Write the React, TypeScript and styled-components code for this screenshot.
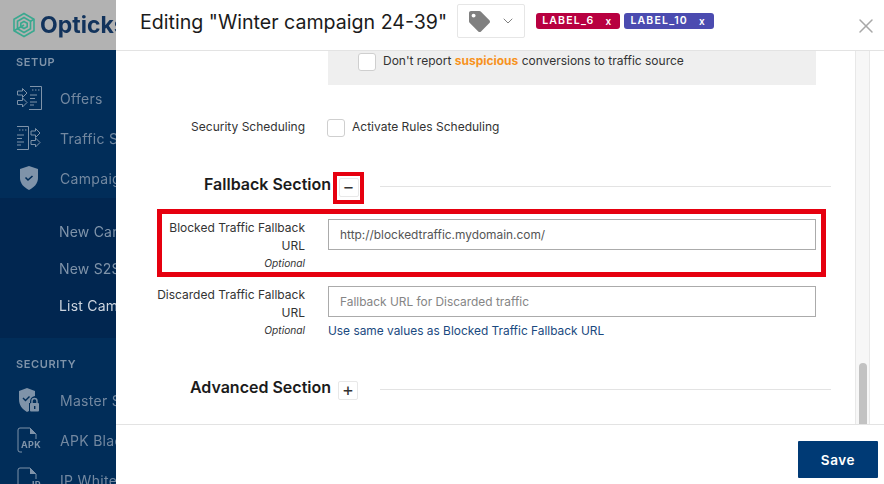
import React from "react";
import styled, { createGlobalStyle } from "styled-components";
import { FaTag } from "react-icons/fa";
import { ChevronDown, X } from "lucide-react";

const GlobalStyle = createGlobalStyle`
  html, body {
    margin: 0;
    padding: 0;
    width: 884px;
    height: 484px;
    overflow: hidden;
    font-family: Inter, "Liberation Sans", sans-serif;
    background: #fff;
  }
  * { box-sizing: border-box; }
`;

const OffersIcon = () => (
  <svg width="26" height="26" viewBox="0 0 26 26" fill="none" stroke="currentColor" strokeWidth="1">
    <path d="M14 1.500h11.500v23H13" />
    <path d="M16 5h8" strokeDasharray="1.500 1.500" />
    <path d="M14 10h7M14 13.500h5M14 17h7M14 20h4" />
    <path d="M1.500 6h5V3.500L11 8l-4.500 4.500V10h-5z" />
    <path d="M1.500 15.500h5V13l4.500 4.500L6.500 22v-2.500h-5z" />
  </svg>
);

const TrafficIcon = () => (
  <svg width="26" height="26" viewBox="0 0 26 26" fill="none" stroke="currentColor" strokeWidth="1">
    <path d="M1 1.500h11.500v23H1" />
    <path d="M3 5h8" strokeDasharray="1.500 1.500" />
    <path d="M1 10h7M1 13.500h5M1 17h7M1 20h4" />
    <path d="M15 6h4.500V3.500L24 8l-4.500 4.500V10H15z" />
    <path d="M15 15.500h4.500V13l4.500 4.500-4.500 4.500v-2.500H15z" />
  </svg>
);

const ShieldIcon = () => (
  <svg width="20" height="24" viewBox="0 0 20 24">
    <path fill="currentColor" d="M10 0l9 3v9c0 5.500-4 9.500-9 12-5-2.500-9-6.500-9-12V3z" />
    <path fill="none" stroke="#012c57" strokeWidth="1.600" d="M6.500 11.500L9 14l4.500-4" />
  </svg>
);

const LockShieldIcon = () => (
  <svg width="22" height="26" viewBox="0 0 22 26">
    <path fill="currentColor" d="M9 1l8 3v5a6 6 0 0 0-5 6v1h-1v8l-2 1C4 22 1 18 1 12V4z" />
    <path fill="none" stroke="#012c57" strokeWidth="1.400" d="M5 11l2.500 2.500 4-4" />
    <rect x="12" y="16" width="9" height="8.500" rx="1" fill="currentColor" />
    <path fill="none" stroke="currentColor" strokeWidth="1.400" d="M14 16v-2a2.500 2.500 0 0 1 5 0v2" />
    <rect x="16" y="19" width="1.400" height="3" fill="#012c57" />
  </svg>
);

const FileIcon = ({ label }: { label: string }) => (
  <svg width="25" height="26" viewBox="0 0 25 26" fill="none">
    <path stroke="currentColor" d="M5 25H3a2 2 0 0 1-2-2V3a2 2 0 0 1 2-2h10l6 6v5" />
    <path fill="currentColor" d="M13 1l6 6h-6z" />
    <text x="24" y="21" fontSize="9" fontWeight="700" textAnchor="end" fill="currentColor" fontFamily="Inter, sans-serif">
      {label}
    </text>
  </svg>
);

const LogoIcon = () => (
  <svg width="24" height="26" viewBox="0 0 24 26" fill="none" stroke="#3aa88f" strokeWidth="1.600" style={{ flex: "none" }}>
    <path d="M12 1.500l10 5.700v11.600l-10 5.700-10-5.700V7.200z" />
    <path d="M12 5.500l6.500 3.700v7.600L12 20.500l-6.500-3.700V9.200z" />
    <path d="M12 9.500l3.200 1.800v3.400L12 16.500l-3.200-1.800v-3.400z" />
    <path d="M5.500 16.800l6.500-3.800M18.500 9.200L22 7.200M2 18.800l3.500-2" />
  </svg>
);

const App = () => {
  return (
    <Page>
      <GlobalStyle />
      <Sidebar>
        <LogoBar>
          <LogoIcon />
          <LogoText>Opticks</LogoText>
        </LogoBar>
        <NavBody>
          <NavHeading>SETUP</NavHeading>
          <NavItem><NavIcon><OffersIcon /></NavIcon>Offers</NavItem>
          <NavItem><NavIcon><TrafficIcon /></NavIcon>Traffic Sources</NavItem>
          <NavItem><NavIcon><ShieldIcon /></NavIcon>Campaigns</NavItem>
          <SubMenu>
            <SubItem>New Campaign</SubItem>
            <SubItem>New S2S Campaign</SubItem>
            <SubItem $active>List Campaigns</SubItem>
          </SubMenu>
          <NavHeading>SECURITY</NavHeading>
          <NavItem><NavIcon><LockShieldIcon /></NavIcon>Master Settings</NavItem>
          <NavItem><NavIcon><FileIcon label="APK" /></NavIcon>APK Blacklist</NavItem>
          <NavItem><NavIcon><FileIcon label="IP" /></NavIcon>IP Whitelist</NavItem>
        </NavBody>
      </Sidebar>

      <Modal>
        <Header>
          <Title>Editing "Winter campaign 24-39"</Title>
          <TagSelect>
            <FaTag size={21} color="#808080" />
            <ChevronDown size={16} strokeWidth={1.5} color="#808080" />
          </TagSelect>
          <Labels>
            <Label $color="#b80040">LABEL_6<LabelClose>x</LabelClose></Label>
            <Label $color="#4b4bb0">LABEL_10<LabelClose>x</LabelClose></Label>
          </Labels>
          <CloseButton><X size={24} strokeWidth={1.500} color="#a8a8a8" /></CloseButton>
        </Header>

        <Body>
          <Scroll>
            <GreyPanel>
              <Checkbox />
              <CheckText>
                Don't report <Suspicious>suspicious</Suspicious> conversions to traffic source
              </CheckText>
            </GreyPanel>

            <ScheduleRow>
              <ScheduleLabel>Security Scheduling</ScheduleLabel>
              <Checkbox />
              <CheckText>Activate Rules Scheduling</CheckText>
            </ScheduleRow>

            <SectionRow $top={39}>
              <SectionTitle>Fallback Section</SectionTitle>
              <ToggleHighlight><Toggle>−</Toggle></ToggleHighlight>
              <SectionLine />
            </SectionRow>

            <HighlightBox>
              <FieldLabel>
                Blocked Traffic Fallback URL
                <Optional>Optional</Optional>
              </FieldLabel>
              <Field>
                <UrlInput readOnly value="http://blockedtraffic.mydomain.com/" />
              </Field>
            </HighlightBox>

            <FieldRow>
              <FieldLabel>
                Discarded Traffic Fallback URL
                <Optional>Optional</Optional>
              </FieldLabel>
              <Field>
                <UrlInput readOnly placeholder="Fallback URL for Discarded traffic" />
                <SameLink>Use same values as Blocked Traffic Fallback URL</SameLink>
              </Field>
            </FieldRow>

            <SectionRow $top={40}>
              <SectionTitle>Advanced Section</SectionTitle>
              <PlainToggle>+</PlainToggle>
              <SectionLine />
            </SectionRow>
          </Scroll>
          <ScrollTrack>
            <ScrollThumb />
          </ScrollTrack>
        </Body>

        <Footer>
          <SaveButton>Save</SaveButton>
        </Footer>
      </Modal>
    </Page>
  );
};

export default App;

const Page = styled.div`
  width: 884px;
  height: 484px;
  display: flex;
  overflow: hidden;
`;

const Sidebar = styled.aside`
  width: 116px;
  flex: none;
  display: flex;
  flex-direction: column;
  overflow: hidden;
  white-space: nowrap;
  filter: blur(0.4px);
`;

const LogoBar = styled.div`
  height: 50px;
  flex: none;
  background: #b2b2b2;
  display: flex;
  align-items: center;
  gap: 4px;
  padding-left: 12px;
`;

const LogoText = styled.span`
  font-size: 23px;
  font-weight: 700;
  color: #12335c;
`;

const NavBody = styled.nav`
  flex: 1;
  background: #012d59;
  overflow: hidden;
`;

const NavHeading = styled.div`
  height: 28px;
  padding: 6px 0 0 16px;
  font-size: 11px;
  font-weight: 600;
  letter-spacing: 0.6px;
  line-height: 13px;
  color: #7f93a9;
`;

const NavItem = styled.div`
  height: 40px;
  display: flex;
  align-items: center;
  color: #7388a0;
  font-size: 14px;
  letter-spacing: 0.3px;
`;

const NavIcon = styled.span`
  width: 26px;
  flex: none;
  margin: 0 18px 0 16px;
  display: flex;
  justify-content: center;
  color: #7f93a9;
`;

const SubMenu = styled.div`
  background: #012650;
  padding: 15px 0 14px;
  margin-bottom: 14px;
`;

const SubItem = styled.div<{ $active?: boolean }>`
  height: 37px;
  line-height: 37px;
  padding-left: 59px;
  font-size: 14px;
  letter-spacing: 0.2px;
  color: ${(props) => (props.$active ? "#ccd4de" : "#7f93a9")};
`;

const Modal = styled.main`
  flex: 1;
  min-width: 0;
  background: #fff;
  display: flex;
  flex-direction: column;
`;

const Header = styled.header`
  height: 51px;
  flex: none;
  border-bottom: 1px solid #e3e3e3;
  display: flex;
  align-items: flex-start;
  padding-left: 24px;
`;

const Title = styled.h1`
  margin: 9px 0 0;
  font-size: 19.600px;
  font-weight: 400;
  line-height: 26px;
  color: #1b1b1b;
  white-space: nowrap;
`;

const TagSelect = styled.div`
  width: 68px;
  height: 34px;
  margin: 4px 0 0 10px;
  border: 1px solid #e6e6e6;
  border-radius: 2px;
  display: flex;
  align-items: center;
  justify-content: space-between;
  padding: 0 8px 0 11px;
`;

const Labels = styled.div`
  display: flex;
  gap: 4px;
  margin: 13px 0 0 11px;
`;

const Label = styled.span<{ $color: string }>`
  height: 16px;
  border-radius: 3px;
  background: ${(props) => props.$color};
  color: #fff;
  font-size: 10.500px;
  font-weight: 600;
  letter-spacing: 1.200px;
  line-height: 16px;
  padding: 0 8px 0 6px;
  display: flex;
  gap: 11px;
`;

const LabelClose = styled.span`
  font-size: 10px;
`;

const CloseButton = styled.div`
  margin: 14px 6px 0 auto;
  display: flex;
`;

const Body = styled.div`
  flex: 1;
  min-height: 0;
  display: flex;
  overflow: hidden;
`;

const Scroll = styled.div`
  width: 739px;
  flex: none;
  overflow: hidden;
`;

const GreyPanel = styled.div`
  width: 488px;
  height: 34px;
  margin-left: 212px;
  padding: 2px 0 0 30px;
  background: #efefef;
  display: flex;
  align-items: flex-start;
  gap: 7px;
`;

const Checkbox = styled.span`
  width: 18px;
  height: 18px;
  flex: none;
  background: #fff;
  border: 1px solid #cfcfcf;
  border-radius: 3px;
`;

const CheckText = styled.span`
  font-size: 12px;
  line-height: 16px;
  color: #333;
`;

const Suspicious = styled.b`
  font-weight: 700;
  color: #f7931e;
`;

const ScheduleRow = styled.div`
  margin-top: 34px;
  height: 18px;
  display: flex;
  align-items: flex-start;
  gap: 7px;
`;

const ScheduleLabel = styled.span`
  width: 189px;
  margin-right: 15px;
  text-align: right;
  font-size: 12px;
  line-height: 16px;
  color: #333;
`;

const SectionRow = styled.div<{ $top: number }>`
  margin-top: ${(props) => props.$top}px;
  height: 20px;
  display: flex;
  align-items: center;
`;

const SectionTitle = styled.h3`
  width: 215px;
  margin: 0;
  padding-bottom: 5px;
  text-align: right;
  font-size: 16px;
  line-height: 20px;
  font-weight: 600;
  color: #1b1b1b;
  white-space: nowrap;
`;

const ToggleHighlight = styled.div`
  width: 31px;
  height: 32px;
  flex: none;
  margin: 3px -6px 0 2px;
  border: 4px solid #e6000f;
  display: flex;
  align-items: center;
  justify-content: center;
`;

const Toggle = styled.span`
  width: 20px;
  height: 19px;
  border: 1px solid #e8e8e8;
  border-radius: 2px;
  font-size: 18px;
  line-height: 16px;
  text-align: center;
  color: #333;
`;

const PlainToggle = styled(Toggle)`
  margin: 3px 0 0 7px;
  flex: none;
`;

const SectionLine = styled.div`
  width: 451px;
  height: 1px;
  flex: none;
  margin-left: 22px;
  background: #e3e3e3;
`;

const FieldRow = styled.div`
  display: grid;
  grid-template-columns: 151px 488px;
  column-gap: 23px;
  margin: 9px 0 0 38px;
`;

const HighlightBox = styled(FieldRow)`
  width: 669px;
  height: 68px;
  margin: 13px 0 0 41px;
  grid-template-columns: 143px 488px;
  padding: 5px 0 0 0;
  border: 5px solid #e6000f;
`;

const FieldLabel = styled.label`
  font-size: 12px;
  line-height: 18px;
  text-align: right;
  color: #333;
`;

const Optional = styled.div`
  font-size: 10.200px;
  line-height: 16px;
  font-style: italic;
`;

const Field = styled.div`
  display: flex;
  flex-direction: column;
`;

const UrlInput = styled.input`
  width: 488px;
  height: 31px;
  padding: 0 11px;
  border: 1px solid #ababab;
  border-radius: 0;
  outline: none;
  font: 11.900px Inter, "Liberation Sans", sans-serif;
  color: #555;
  &::placeholder { color: #858585; opacity: 1; }
`;

const SameLink = styled.a`
  margin-top: 6px;
  font-size: 11.900px;
  line-height: 16px;
  color: #1a4a80;
`;

const ScrollTrack = styled.div`
  width: 15px;
  background: #f7f7f7;
  border-left: 1px solid #e8e8e8;
  border-right: 1px solid #e8e8e8;
  position: relative;
`;

const ScrollThumb = styled.div`
  position: absolute;
  left: 3px;
  top: 312px;
  bottom: 0;
  width: 8px;
  background: #c2c2c2;
  border-radius: 4px 4px 0 0;
`;

const Footer = styled.footer`
  height: 60px;
  flex: none;
  border-top: 1px solid #e3e3e3;
  display: flex;
  justify-content: flex-end;
  align-items: flex-start;
  padding: 16px 6px 0 0;
`;

const SaveButton = styled.button`
  width: 80px;
  height: 37px;
  border: none;
  border-radius: 1px;
  background: #003a75;
  color: #fff;
  font: 600 13.500px Inter, "Liberation Sans", sans-serif;
  letter-spacing: 0.6px;
`;
